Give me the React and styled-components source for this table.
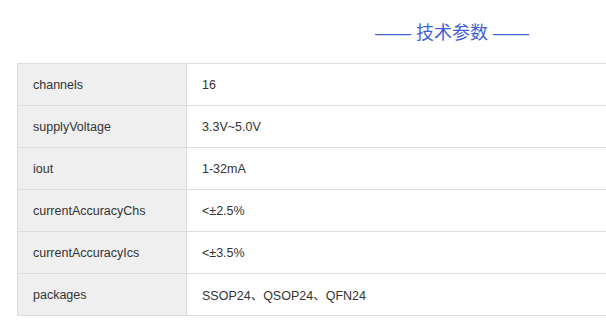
import React from "react";
import styled, { createGlobalStyle } from "styled-components";

const Global = createGlobalStyle`
  body {
    margin: 0;
    background: #fff;
    overflow: hidden;
    font-family: "Liberation Sans", Arial, "Noto Sans CJK SC", sans-serif;
  }
`;

const Wrapper = styled.div`
  width: 870px;
  padding-left: 17px;
`;

const Title = styled.h3`
  margin: 0;
  height: 63px;
  display: flex;
  align-items: center;
  justify-content: center;
  padding-bottom: 2px;
  box-sizing: border-box;
  font-size: 18px;
  font-weight: normal;
  color: #3f5fd4;
  font-family: "Liberation Sans", "Noto Sans CJK SC", sans-serif;
  white-space: pre;
`;

const Table = styled.table`
  width: 100%;
  border-collapse: collapse;
  font-size: 12.5px;
  color: #333;
`;

const Cell = styled.td`
  height: 41px;
  padding: 0 15px;
  border: 1px solid #ddd;
  background: ${(p) => (p.$label ? "#efefef" : "#fff")};
  width: ${(p) => (p.$label ? "138px" : "auto")};
`;

const rows = [
  ["channels", "16"],
  ["supplyVoltage", "3.3V~5.0V"],
  ["iout", "1-32mA"],
  ["currentAccuracyChs", "<±2.5%"],
  ["currentAccuracyIcs", "<±3.5%"],
  ["packages", "SSOP24、QSOP24、QFN24"],
];

export default function App() {
  return (
    <Wrapper>
      <Global />
      <Title>—— 技术参数 ——</Title>
      <Table>
        <tbody>
          {rows.map(([k, v]) => (
            <tr key={k}>
              <Cell $label>{k}</Cell>
              <Cell>{v}</Cell>
            </tr>
          ))}
        </tbody>
      </Table>
    </Wrapper>
  );
}
